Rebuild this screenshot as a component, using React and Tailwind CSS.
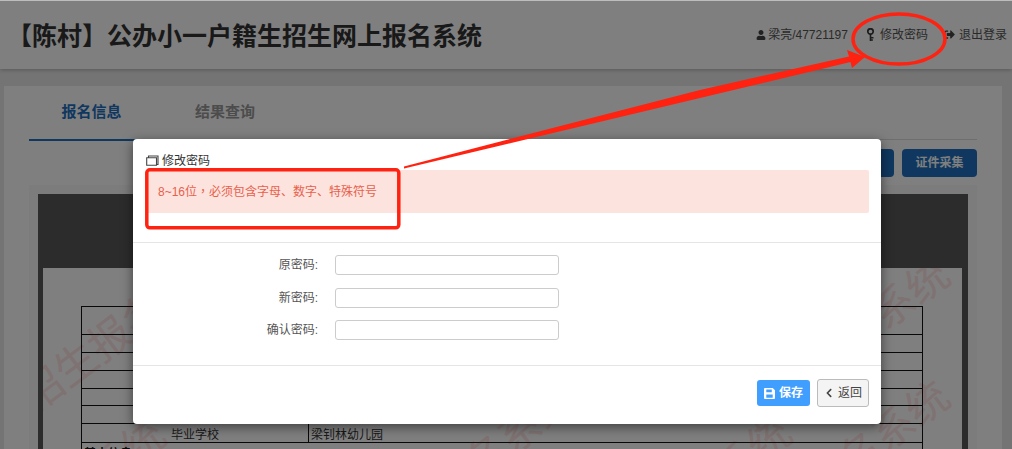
import React from "react";
import { FaUser, FaChevronLeft, FaSignOutAlt } from "react-icons/fa";

const FONT = "font-['Liberation_Sans','Noto_Sans_CJK_SC',sans-serif]";

const KeyIcon = () => (
  <svg width="10" height="13" viewBox="0 0 10 13" className="text-[#3a3a3a]">
    <circle cx="4.5" cy="3.5" r="2.7" fill="none" stroke="currentColor" strokeWidth="1.7" />
    <path d="M4.5 6v7M4.5 9.7h3M4.5 12h2.4" fill="none" stroke="currentColor" strokeWidth="1.6" />
  </svg>
);

const WindowIcon = () => (
  <svg width="13" height="11" viewBox="0 0 13 11" className="text-[#444]">
    <path d="M2.5 2.5V1h9.5v8.5h-1.5M.7 2.7h9.8v7.6H.7z" fill="none" stroke="currentColor" strokeWidth="1.1" />
  </svg>
);

const SaveIcon = () => (
  <svg width="11" height="11" viewBox="0 0 12 12">
    <path
      fillRule="evenodd"
      fill="currentColor"
      d="M1 0h8.5L12 2.5V11a1 1 0 0 1-1 1H1a1 1 0 0 1-1-1V1a1 1 0 0 1 1-1zM2.5 1.5v3h6v-3zM2.5 7v3.5h7V7z"
    />
  </svg>
);

const Watermark = ({ className }) => (
  <div className={`absolute whitespace-nowrap w-[252px] h-[60px] leading-[60px] text-[42px] text-[#ffe4e4] -rotate-[37deg] ${className}`}>
    招生报名系统
  </div>
);

const PasswordRow = ({ label, className = "" }) => (
  <div className={`flex items-center h-[20px] ${className}`}>
    <label className="w-[185px] text-right text-[12px] text-[#555]">{label}:</label>
    <input className="ml-[17px] w-[224px] h-[20px] bg-white border border-[#ccc] rounded-[3px]" />
  </div>
);

const ROWS = [28, 18, 18, 18, 17, 18];

export default function App() {
  return (
    <div className={`relative h-[449px] w-[1012px] overflow-hidden bg-[#e9e9e9] ${FONT}`}>
      {/* page behind the dialog */}
      <header className="flex items-center justify-between h-[69px] bg-white shadow-[0_1px_4px_rgba(0,0,0,0.25)] pl-[7px] pr-[5px]">
        <h1 className="text-[25px] leading-none font-bold text-[#333] mt-[3px]">
          【陈村】公办小一户籍生招生网上报名系统
        </h1>
        <div className="flex items-center text-[12px] text-[#555]">
          <FaUser className="text-[10px] text-[#444] mr-[2px]" />
          <span>梁亮/47721197</span>
          <span className="ml-[18px] mr-[4px]"><KeyIcon /></span>
          <span>修改密码</span>
          <FaSignOutAlt className="ml-[16px] mr-[4px] text-[11px] text-[#444]" />
          <span>退出登录</span>
        </div>
      </header>

      <main className="mt-[17px] ml-[4px] mr-[10px] h-[400px] bg-white px-[25px]">
        <div className="flex h-[54px] border-b border-[#ddd]">
          <div className="w-[125px] h-[55px] flex items-center justify-center border-b-2 border-[#1e6fbf] text-[15px] font-bold text-[#1e6fbf]">
            报名信息
          </div>
          <div className="w-[142px] h-[53px] flex items-center justify-center text-[15px] font-bold text-[#999]">
            结果查询
          </div>
        </div>
        <div className="flex justify-end gap-[8px] mt-[9px] h-[28px]">
          <div className="w-[75px] rounded-[4px] bg-[#1e6fbf]" />
          <div className="w-[75px] rounded-[4px] bg-[#1e6fbf] flex items-center justify-center text-[12px] font-bold text-white">
            证件采集
          </div>
        </div>
        <div className="mt-[8px] h-[300px] bg-[#f8f8f8] px-[9px] pt-[9px] overflow-hidden">
          <div className="h-[300px] bg-[#58595b] pl-[5px] pr-[6px] pt-[74px]">
            <div className="relative h-[240px] bg-white pl-[38px] pt-[38px] overflow-hidden">
              <Watermark className="left-[-42px] top-[29px]" />
              <Watermark className="left-[675px] top-[47px]" />
              <Watermark className="left-[675px] top-[169px]" />
              <Watermark className="left-[-109px] top-[207px]" />
              <Watermark className="left-[517px] top-[205px]" />
              <Watermark className="left-[301px] top-[172px]" />
              <table className="relative w-[842px] border-collapse border border-[#111] text-[12px] leading-[14px] text-[#333]">
                <tbody>
                  {ROWS.map((h, i) => (
                    <tr key={i} style={{ height: h }} className="border-b border-[#111]">
                      <td colSpan={2} />
                    </tr>
                  ))}
                  <tr className="h-[18px] border-b border-[#111]">
                    <td className="w-[227px] p-0 pt-[4px] text-center border-r border-[#111]">毕业学校</td>
                    <td className="p-0 pt-[4px] pl-[2px]">梁钊林幼儿园</td>
                  </tr>
                  <tr className="h-[18px]">
                    <td colSpan={2} className="p-0 pt-[4px] pl-[2px] font-bold text-[#111]">基本信息</td>
                  </tr>
                </tbody>
              </table>
            </div>
          </div>
        </div>
      </main>

      <div className="absolute inset-x-0 top-0 h-[1px] bg-[#bdbdbd] z-20" />

      {/* dim layer */}
      <div className="absolute inset-0 bg-black/50" />

      {/* dialog */}
      <div className="absolute left-[133px] top-[139px] w-[748px] h-[285px] bg-white rounded-[4px] shadow-[0_3px_12px_rgba(0,0,0,0.5)] flex flex-col">
        <div className="h-[104px] border-b border-[#e5e5e5] pl-[13px] pr-[12px] pt-[14px]">
          <div className="flex items-center gap-[3px] h-[15px] text-[12px] text-[#333]">
            <WindowIcon />
            <span>修改密码</span>
          </div>
          <div className="mt-[2px] h-[43px] bg-[#fde3de] rounded-[2px] flex items-center pl-[12px] text-[12px] text-[#e8604c]">
            <span>
              8~16位<span className="font-['Noto_Sans_CJK_TC',sans-serif]">，</span>必须包含字母、数字、特殊符号
            </span>
          </div>
        </div>
        <div className="h-[123px] border-b border-[#e5e5e5] pt-[12px] flex flex-col gap-[13px]">
          <PasswordRow label="原密码" />
          <PasswordRow label="新密码" />
          <PasswordRow label="确认密码" className="-mt-[1px]" />
        </div>
        <div className="flex items-center justify-end gap-[7px] pr-[12px] pb-[4px] flex-1">
          <button className="flex items-center justify-center gap-[4px] w-[53px] h-[26px] rounded-[3px] bg-[#409eff] text-[12px] font-bold text-white">
            <SaveIcon />
            保存
          </button>
          <button className="flex items-center justify-center gap-[4px] w-[52px] h-[28px] rounded-[3px] border border-[#bbb] bg-[#f4f4f4] text-[12px] text-[#444]">
            <FaChevronLeft className="text-[10px]" />
            返回
          </button>
        </div>
      </div>

      {/* red annotations drawn on the screenshot */}
      <svg className="absolute inset-0" width="1012" height="449" viewBox="0 0 1012 449">
        <rect x="146.8" y="169.8" width="252" height="58" rx="3" fill="none" stroke="#ff2211" strokeWidth="3.5" />
        <ellipse cx="899" cy="39" rx="46" ry="25" fill="none" stroke="#ff2211" strokeWidth="3.5" />
        <path d="M404 166.5L700 90L849 56.5L847 50L865 57L852 68L850.5 62L700 98L404 168.5Z" fill="#ff2211" />
      </svg>
    </div>
  );
}
